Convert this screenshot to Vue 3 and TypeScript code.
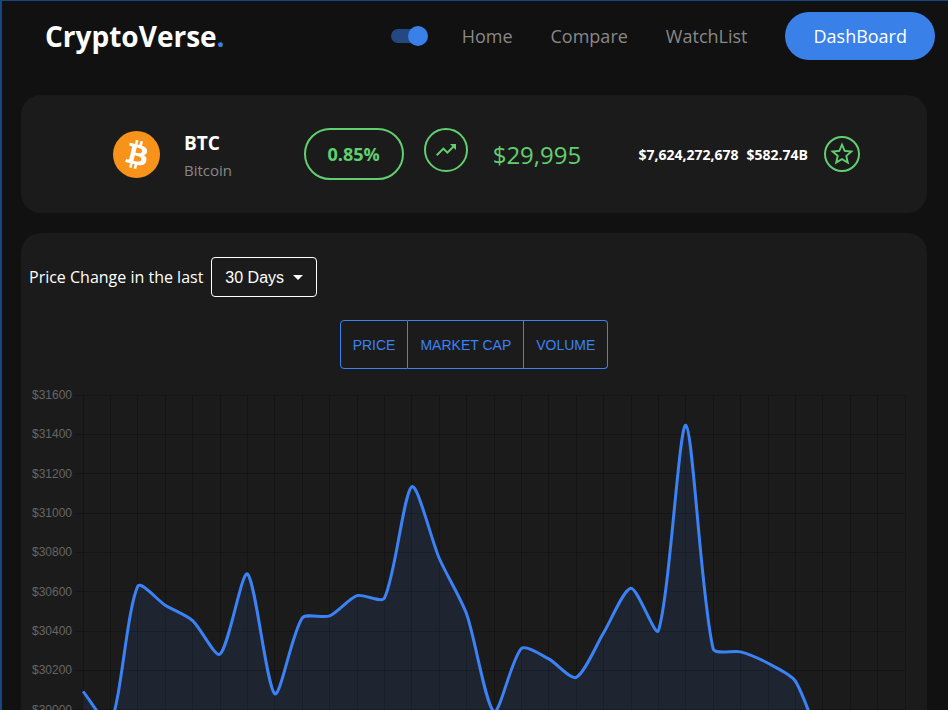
<script setup lang="ts">
import { computed, onBeforeUnmount, onMounted, ref } from 'vue'

interface Point {
  x: number
  y: number
}

const metrics = ['Price', 'Market Cap', 'Volume']
const ranges = [7, 30, 60, 90, 120]
const days = ref(30)
const metric = ref('Price')
const darkMode = ref(true)

const prices = [
  30093, 29930, 30628, 30531, 30453, 30282, 30690, 30081, 30466, 30477, 30580,
  30567, 31134, 30770, 30486, 29990, 30311, 30258, 30164, 30391, 30618, 30402,
  31446, 30309, 30294, 30236, 30145, 29790, 29420, 29350, 29320,
]
const ticks = [31600, 31400, 31200, 31000, 30800, 30600, 30400, 30200, 30000, 29800, 29600, 29400, 29200]

const chartBox = ref<HTMLElement | null>(null)
const width = ref(890)
const plotTop = 10
const plotHeight = 472
const chartHeight = plotTop + plotHeight + 12
const plotLeft = 54
const plotRight = computed(() => width.value - 14)

const toY = (value: number) => plotTop + ((31600 - value) / 2400) * plotHeight
const crisp = (value: number) => Math.floor(value) + 0.5

const points = computed<Point[]>(() => {
  const step = (plotRight.value - plotLeft) / (prices.length - 1)
  return prices.map((price, i) => ({ x: plotLeft + i * step, y: toY(price) }))
})

// Smooths the line, weighting each handle by the distance to its neighbour.
function handles(prev: Point, mid: Point, next: Point, tension: number) {
  const before = Math.hypot(mid.x - prev.x, mid.y - prev.y)
  const after = Math.hypot(next.x - mid.x, next.y - mid.y)
  const a = (tension * before) / (before + after || 1)
  const b = (tension * after) / (before + after || 1)
  const dx = next.x - prev.x
  const dy = next.y - prev.y
  return {
    enter: { x: mid.x - a * dx, y: mid.y - a * dy },
    leave: { x: mid.x + b * dx, y: mid.y + b * dy },
  }
}

const linePath = computed(() => {
  const p = points.value
  const h = p.map((point, i) => handles(p[i - 1] ?? point, point, p[i + 1] ?? point, 0.25))
  let d = `M${p[0].x} ${p[0].y}`
  for (let i = 1; i < p.length; i++) {
    const c1 = h[i - 1].leave
    const c2 = h[i].enter
    d += `C${c1.x} ${c1.y} ${c2.x} ${c2.y} ${p[i].x} ${p[i].y}`
  }
  return d
})

const areaPath = computed(
  () => `${linePath.value}V${plotTop + plotHeight}H${plotLeft}Z`,
)

let observer: ResizeObserver | undefined
onMounted(() => {
  const box = chartBox.value
  if (!box) return
  width.value = box.clientWidth
  observer = new ResizeObserver(() => {
    width.value = box.clientWidth
  })
  observer.observe(box)
})
onBeforeUnmount(() => observer?.disconnect())
</script>

<template>
  <div class="page">
    <header class="header">
      <a class="logo" href="#">CryptoVerse<span class="logo-dot">.</span></a>
      <nav class="nav">
        <input v-model="darkMode" class="switch" type="checkbox" role="switch" aria-label="Dark mode" />
        <a class="nav-link" href="#">Home</a>
        <a class="nav-link" href="#">Compare</a>
        <a class="nav-link" href="#">WatchList</a>
        <button class="dashboard" type="button">DashBoard</button>
      </nav>
    </header>

    <main class="content">
      <section class="card coin">
        <svg class="coin-logo" viewBox="0 0 32 32" aria-hidden="true">
          <circle cx="16" cy="16" r="16" fill="#f7931a" />
          <path
            fill="#fff"
            d="M23.189 14.02c.314-2.096-1.283-3.223-3.465-3.975l.708-2.84-1.728-.43-.69 2.765c-.454-.114-.92-.22-1.385-.326l.695-2.783L15.596 6l-.708 2.839c-.376-.086-.746-.17-1.104-.26l.002-.009-2.384-.595-.46 1.846s1.283.294 1.256.312c.7.175.826.638.805 1.006l-.806 3.235c.048.012.11.03.18.057l-.183-.045-1.13 4.532c-.086.212-.303.531-.793.41.018.025-1.256-.313-1.256-.313l-.858 1.978 2.25.561c.418.105.828.215 1.231.318l-.715 2.872 1.727.43.708-2.84c.472.127.93.245 1.378.357l-.706 2.828 1.728.43.715-2.866c2.948.558 5.164.333 6.097-2.333.752-2.146-.037-3.385-1.588-4.192 1.13-.26 1.98-1.003 2.207-2.538zm-3.95 5.538c-.533 2.147-4.148.986-5.32.695l.95-3.805c1.172.293 4.929.872 4.37 3.11zm.535-5.569c-.487 1.953-3.495.96-4.47.717l.86-3.45c.975.243 4.118.696 3.61 2.733z"
          />
        </svg>
        <div class="coin-name">
          <h1 class="symbol">BTC</h1>
          <p class="name">Bitcoin</p>
        </div>
        <div class="change">
          <span class="chip">0.85%</span>
          <span class="trend">
            <svg viewBox="0 0 24 24" width="24" height="24" aria-hidden="true">
              <path fill="currentColor" d="m16 6 2.29 2.29-4.88 4.88-4-4L2 16.59 3.41 18l6-6 4 4 6.3-6.29L22 12V6z" />
            </svg>
          </span>
        </div>
        <p class="price">$29,995</p>
        <div class="totals">
          <span>$7,624,272,678</span>
          <span>$582.74B</span>
        </div>
        <button class="star" type="button" aria-label="Add to watchlist">
          <svg viewBox="0 0 24 24" width="28" height="28" aria-hidden="true">
            <path
              fill="currentColor"
              d="m22 9.24-7.19-.62L12 2 9.19 8.63 2 9.24l5.46 4.73L5.82 21 12 17.27 18.18 21l-1.63-7.03zM12 15.4l-3.76 2.27 1-4.28-3.32-2.88 4.38-.38L12 6.1l1.71 4.04 4.38.38-3.32 2.88 1 4.28z"
            />
          </svg>
        </button>
      </section>

      <section class="card history">
        <div class="range">
          <label for="days">Price Change in the last</label>
          <div class="select-box">
            <select id="days" v-model="days" class="select">
              <option v-for="n in ranges" :key="n" :value="n">{{ n }} Days</option>
            </select>
            <svg class="caret" viewBox="0 0 10 5" width="10" height="5" aria-hidden="true">
              <path fill="currentColor" d="m0 0 5 5 5-5z" />
            </svg>
          </div>
        </div>

        <div class="toggle" role="group" aria-label="Chart data">
          <button
            v-for="m in metrics"
            :key="m"
            class="toggle-item"
            type="button"
            :aria-pressed="metric === m"
            @click="metric = m"
          >
            {{ m }}
          </button>
        </div>

        <div ref="chartBox" class="chart">
          <svg class="plot" :width="width" :height="chartHeight" role="img" aria-label="Price chart">
            <g class="grid">
              <path v-for="t in ticks" :key="t" :d="`M${plotLeft - 8} ${crisp(toY(t))}H${plotRight}`" />
              <path v-for="(p, i) in points" :key="i" :d="`M${crisp(p.x)} ${plotTop}V${plotTop + plotHeight + 8}`" />
            </g>
            <path class="area" :d="areaPath" />
            <path class="line" :d="linePath" />
            <text v-for="t in ticks" :key="t" class="tick" :x="plotLeft - 11" :y="Math.round(toY(t)) + 4">${{ t }}</text>
          </svg>
        </div>
      </section>
    </main>
  </div>
</template>

<style>
body {
  background: #111;
}
</style>

<style scoped>
.page {
  box-sizing: border-box;
  min-height: 100vh;
  border-top: 1px solid #164684;
  border-left: 2px solid #164684;
  background: #111;
  color: #fff;
  font-family: 'Open Sans', sans-serif;
}

.header {
  display: flex;
  align-items: center;
  justify-content: space-between;
  padding: 11px 13px 11px 43px;
}

.logo {
  color: #fff;
  font-size: 28px;
  font-weight: 700;
  text-decoration: none;
}

.logo-dot {
  color: #3a80e9;
}

.nav {
  display: flex;
  align-items: center;
  gap: 38px;
}

.switch {
  appearance: none;
  display: grid;
  grid-template-columns: 37px;
  align-items: center;
  width: 37px;
  height: 20px;
  margin: 0 -4px 0 0;
  cursor: pointer;
}

.switch::before,
.switch::after {
  content: '';
  grid-area: 1 / 1;
}

.switch::before {
  width: 34px;
  height: 14px;
  border-radius: 7px;
  background: #244882;
}

.switch::after {
  width: 20px;
  height: 20px;
  border-radius: 50%;
  background: #3a80e9;
}

.switch:checked::after {
  justify-self: end;
}

.nav-link {
  color: #888;
  font-size: 18px;
  text-decoration: none;
}

.dashboard {
  height: 48px;
  padding: 0 28px;
  border: 0;
  border-radius: 24px;
  background: #3a80e9;
  color: #fff;
  font: 400 18px 'Open Sans', sans-serif;
  cursor: pointer;
}

.content {
  display: grid;
  gap: 20px;
  padding: 24px 21px 20px 19px;
}

.card {
  border-radius: 20px;
  background: #1b1b1b;
}

.coin {
  display: flex;
  align-items: center;
  padding: 29px 67px 29px 92px;
}

.coin-logo {
  flex: none;
  width: 47px;
  height: 47px;
}

.coin-name {
  flex: 5 1 auto;
  margin-left: 24px;
  padding-top: 5px;
}

.symbol,
.name,
.price {
  margin: 0;
}

.symbol {
  font-size: 19px;
  font-weight: 700;
  line-height: 28px;
}

.name {
  color: #888;
  font-size: 15px;
  line-height: 27px;
}

.change {
  display: flex;
  gap: 20px;
  margin-right: 25px;
}

.chip,
.trend,
.star {
  box-sizing: border-box;
  display: flex;
  align-items: center;
  justify-content: center;
  border: 2px solid #61cf70;
  color: #61cf70;
}

.chip {
  width: 100px;
  height: 52px;
  border-radius: 26px;
  font-size: 18px;
  font-weight: 700;
}

.trend {
  width: 44px;
  height: 44px;
  border-radius: 50%;
}

.price {
  flex: 4 1 auto;
  color: #61cf70;
  font-size: 24px;
}

.totals {
  display: flex;
  gap: 8px;
  margin-right: 16px;
  font-size: 14px;
  font-weight: 700;
}

.star {
  width: 36px;
  height: 36px;
  padding: 0;
  border-radius: 50%;
  background: none;
  cursor: pointer;
}

.star svg {
  flex: none;
}

.history {
  padding: 24px 8px;
}

.range {
  display: flex;
  align-items: center;
  gap: 8px;
  font-size: 16px;
}

.select-box {
  position: relative;
}

.select {
  appearance: none;
  width: 106px;
  height: 40px;
  padding: 0 13px;
  border: 1px solid #fff;
  border-radius: 4px;
  background: #1b1b1b;
  color: #fff;
  font: 16px 'Liberation Sans', sans-serif;
}

.caret {
  position: absolute;
  top: 18px;
  right: 14px;
  pointer-events: none;
}

.toggle {
  display: flex;
  justify-content: center;
  margin: 23px 0 16px;
}

.toggle-item {
  height: 49px;
  margin: 0;
  padding: 0 12px;
  border: 1px solid #3b82f6;
  background: none;
  color: #3b82f6;
  font: 14px 'Liberation Sans', sans-serif;
  text-transform: uppercase;
  cursor: pointer;
}

.toggle-item + .toggle-item {
  border-left: 0;
}

.toggle-item:first-child {
  border-radius: 4px 0 0 4px;
}

.toggle-item:last-child {
  border-radius: 0 4px 4px 0;
}

.chart {
  overflow: hidden;
}

.plot {
  display: block;
}

.grid path {
  stroke: rgba(0, 0, 0, 0.2);
}

.area {
  fill: rgba(58, 128, 233, 0.1);
}

.line {
  fill: none;
  stroke: #3b82f6;
  stroke-width: 3;
}

.tick {
  fill: #666;
  font: 12px 'Liberation Sans', sans-serif;
  text-anchor: end;
}
</style>
